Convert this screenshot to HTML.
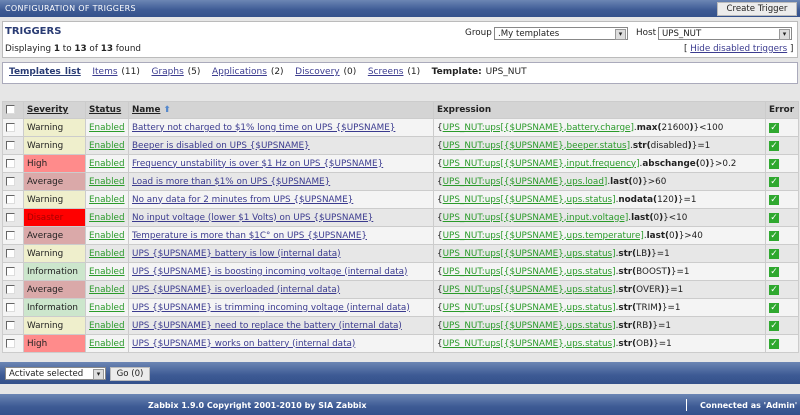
<!DOCTYPE html>
<html><head><meta charset="utf-8"><style>
*{margin:0;padding:0;box-sizing:border-box}
body{width:800px;height:415px;background:#e6e6e6;font-family:"DejaVu Sans","Liberation Sans",sans-serif;font-size:8.8px;color:#222;position:relative;overflow:hidden}
.bar{position:absolute;left:0;width:800px;background:linear-gradient(#6c86b4,#3d5a94 60%,#34518b)}
a{color:#3b3b8f;text-decoration:underline}
.btn{position:absolute;background:#ececec;border:1px solid #bbb;font-size:8.6px;text-align:center;color:#222}
.sel{position:absolute;background:#fff;border:1px solid #888;font-size:8.6px;padding:1px 3px;height:13px}
.sel:after{content:"▾";position:absolute;right:1px;top:1px;width:9px;height:9px;background:#ddd;border:1px solid #999;font-size:7px;line-height:8px;text-align:center}
table{position:absolute;left:2px;top:101px;width:796px;border-collapse:collapse;table-layout:fixed}
td{height:18px;border:1px solid #ccc;padding:0 3px;white-space:nowrap;overflow:hidden}
tr.h td{background:#d4d4d4;font-weight:bold;height:17px}
tr.h a{color:#222}
tr:nth-child(even) td{background:#f4f4f4}
tr:nth-child(odd):not(.h) td{background:#e7e7e7}
.cb{display:inline-block;width:9px;height:9px;border:1px solid #666;border-right-color:#ddd;border-bottom-color:#ddd;background:#fff;vertical-align:middle}
td.W{background:#efefcc!important}td.H{background:#ff8b8b!important}td.A{background:#daa9a9!important}td.D{background:#ff0000!important;color:#a00}td.I{background:#cce6cc!important}
.en{color:#2a9a2a}
.ex a{color:#2a9a2a}
.ok{display:inline-block;width:10px;height:10px;background:#2fa82f;color:#fff;font-size:9px;line-height:10px;text-align:center;font-weight:bold}
</style></head><body>
<div class="bar" style="top:0;height:17px"></div>
<div style="position:absolute;left:5px;top:4px;color:#fff;font-size:8px;letter-spacing:.3px">CONFIGURATION OF TRIGGERS</div>
<div class="btn" style="left:717px;top:2px;width:80px;height:14px;line-height:12px">Create Trigger</div>
<div style="position:absolute;left:2px;top:21px;width:796px;height:37px;background:#fff;border:1px solid #bbb"></div>
<div style="position:absolute;left:5px;top:26px;font-weight:bold;color:#2a3c74;font-size:10px">TRIGGERS</div>
<div style="position:absolute;left:5px;top:44px">Displaying <b>1</b> to <b>13</b> of <b>13</b> found</div>
<div style="position:absolute;left:465px;top:28px">Group</div>
<div class="sel" style="left:494px;top:27px;width:134px">.My templates</div>
<div style="position:absolute;left:636px;top:28px">Host</div>
<div class="sel" style="left:658px;top:27px;width:134px">UPS_NUT</div>
<div style="position:absolute;left:684px;top:44px">[ <a href="#">Hide disabled triggers</a> ]</div>
<div style="position:absolute;left:2px;top:62px;width:796px;height:22px;background:#fff;border:1px solid #aab"></div>
<div style="position:absolute;left:9px;top:67px;word-spacing:1px;font-size:9px"><a href="#" style="font-weight:bold;color:#2a3c74">Templates list</a>&nbsp;&nbsp; <a href="#">Items</a> (11)&nbsp;&nbsp; <a href="#">Graphs</a> (5)&nbsp;&nbsp; <a href="#">Applications</a> (2)&nbsp;&nbsp; <a href="#">Discovery</a> (0)&nbsp;&nbsp; <a href="#">Screens</a> (1)&nbsp;&nbsp; <b>Template:</b> UPS_NUT</div>
<table>
<colgroup><col style="width:21px"><col style="width:62px"><col style="width:43px"><col style="width:305px"><col style="width:332px"><col style="width:33px"></colgroup>
<tr class="h"><td><span class="cb"></span></td><td><a href="#">Severity</a></td><td><a href="#">Status</a></td><td><a href="#">Name</a> <span style="color:#58c">⬆</span></td><td>Expression</td><td>Error</td></tr>
<tr><td><span class="cb"></span></td><td class="W">Warning</td><td><a class="en" href="#">Enabled</a></td><td><a href="#">Battery not charged to $1% long time on UPS {$UPSNAME}</a></td><td class="ex">{<a href="#">UPS_NUT:ups[{$UPSNAME},battery.charge]</a>.<b>max(</b>21600<b>)</b>}&lt;100</td><td><span class="ok">✓</span></td></tr>
<tr><td><span class="cb"></span></td><td class="W">Warning</td><td><a class="en" href="#">Enabled</a></td><td><a href="#">Beeper is disabled on UPS {$UPSNAME}</a></td><td class="ex">{<a href="#">UPS_NUT:ups[{$UPSNAME},beeper.status]</a>.<b>str(</b>disabled<b>)</b>}=1</td><td><span class="ok">✓</span></td></tr>
<tr><td><span class="cb"></span></td><td class="H">High</td><td><a class="en" href="#">Enabled</a></td><td><a href="#">Frequency unstability is over $1 Hz on UPS {$UPSNAME}</a></td><td class="ex">{<a href="#">UPS_NUT:ups[{$UPSNAME},input.frequency]</a>.<b>abschange(</b>0<b>)</b>}&gt;0.2</td><td><span class="ok">✓</span></td></tr>
<tr><td><span class="cb"></span></td><td class="A">Average</td><td><a class="en" href="#">Enabled</a></td><td><a href="#">Load is more than $1% on UPS {$UPSNAME}</a></td><td class="ex">{<a href="#">UPS_NUT:ups[{$UPSNAME},ups.load]</a>.<b>last(</b>0<b>)</b>}&gt;60</td><td><span class="ok">✓</span></td></tr>
<tr><td><span class="cb"></span></td><td class="W">Warning</td><td><a class="en" href="#">Enabled</a></td><td><a href="#">No any data for 2 minutes from UPS {$UPSNAME}</a></td><td class="ex">{<a href="#">UPS_NUT:ups[{$UPSNAME},ups.status]</a>.<b>nodata(</b>120<b>)</b>}=1</td><td><span class="ok">✓</span></td></tr>
<tr><td><span class="cb"></span></td><td class="D">Disaster</td><td><a class="en" href="#">Enabled</a></td><td><a href="#">No input voltage (lower $1 Volts) on UPS {$UPSNAME}</a></td><td class="ex">{<a href="#">UPS_NUT:ups[{$UPSNAME},input.voltage]</a>.<b>last(</b>0<b>)</b>}&lt;10</td><td><span class="ok">✓</span></td></tr>
<tr><td><span class="cb"></span></td><td class="A">Average</td><td><a class="en" href="#">Enabled</a></td><td><a href="#">Temperature is more than $1C° on UPS {$UPSNAME}</a></td><td class="ex">{<a href="#">UPS_NUT:ups[{$UPSNAME},ups.temperature]</a>.<b>last(</b>0<b>)</b>}&gt;40</td><td><span class="ok">✓</span></td></tr>
<tr><td><span class="cb"></span></td><td class="W">Warning</td><td><a class="en" href="#">Enabled</a></td><td><a href="#">UPS {$UPSNAME} battery is low (internal data)</a></td><td class="ex">{<a href="#">UPS_NUT:ups[{$UPSNAME},ups.status]</a>.<b>str(</b>LB<b>)</b>}=1</td><td><span class="ok">✓</span></td></tr>
<tr><td><span class="cb"></span></td><td class="I">Information</td><td><a class="en" href="#">Enabled</a></td><td><a href="#">UPS {$UPSNAME} is boosting incoming voltage (internal data)</a></td><td class="ex">{<a href="#">UPS_NUT:ups[{$UPSNAME},ups.status]</a>.<b>str(</b>BOOST<b>)</b>}=1</td><td><span class="ok">✓</span></td></tr>
<tr><td><span class="cb"></span></td><td class="A">Average</td><td><a class="en" href="#">Enabled</a></td><td><a href="#">UPS {$UPSNAME} is overloaded (internal data)</a></td><td class="ex">{<a href="#">UPS_NUT:ups[{$UPSNAME},ups.status]</a>.<b>str(</b>OVER<b>)</b>}=1</td><td><span class="ok">✓</span></td></tr>
<tr><td><span class="cb"></span></td><td class="I">Information</td><td><a class="en" href="#">Enabled</a></td><td><a href="#">UPS {$UPSNAME} is trimming incoming voltage (internal data)</a></td><td class="ex">{<a href="#">UPS_NUT:ups[{$UPSNAME},ups.status]</a>.<b>str(</b>TRIM<b>)</b>}=1</td><td><span class="ok">✓</span></td></tr>
<tr><td><span class="cb"></span></td><td class="W">Warning</td><td><a class="en" href="#">Enabled</a></td><td><a href="#">UPS {$UPSNAME} need to replace the battery (internal data)</a></td><td class="ex">{<a href="#">UPS_NUT:ups[{$UPSNAME},ups.status]</a>.<b>str(</b>RB<b>)</b>}=1</td><td><span class="ok">✓</span></td></tr>
<tr><td><span class="cb"></span></td><td class="H">High</td><td><a class="en" href="#">Enabled</a></td><td><a href="#">UPS {$UPSNAME} works on battery (internal data)</a></td><td class="ex">{<a href="#">UPS_NUT:ups[{$UPSNAME},ups.status]</a>.<b>str(</b>OB<b>)</b>}=1</td><td><span class="ok">✓</span></td></tr>
</table>
<div class="bar" style="top:362px;height:22px"></div>
<div class="sel" style="left:5px;top:367px;width:101px">Activate selected</div>
<div class="btn" style="left:110px;top:367px;width:40px;height:14px;line-height:12px">Go (0)</div>
<div class="bar" style="top:394px;height:21px"></div>
<div style="position:absolute;left:148px;top:401px;color:#fff;font-weight:bold;font-size:8px">Zabbix 1.9.0 Copyright 2001-2010 by SIA Zabbix</div>
<div style="position:absolute;left:686px;top:399px;width:1px;height:12px;background:#fff"></div>
<div style="position:absolute;left:700px;top:401px;color:#fff;font-weight:bold;font-size:8px">Connected as 'Admin'</div>
</body></html>
